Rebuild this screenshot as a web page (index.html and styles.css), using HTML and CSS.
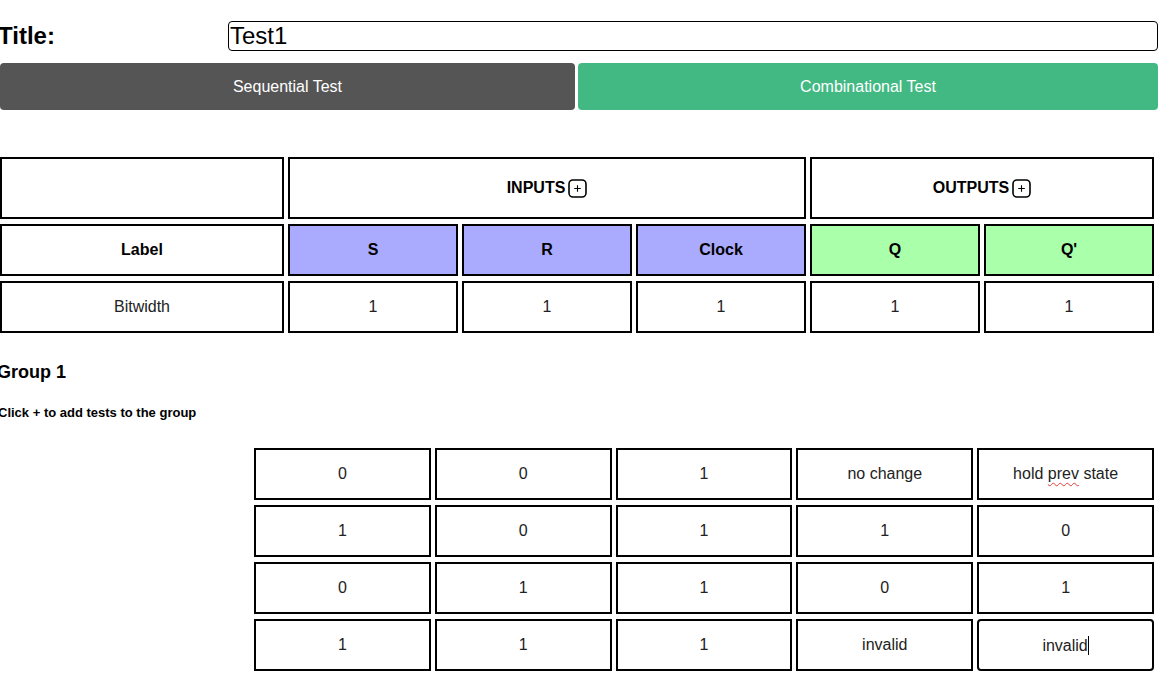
FILE: index.html
```html
<!DOCTYPE html>
<html>
<head>
<meta charset="utf-8">
<link rel="stylesheet" href="styles.css">
</head>
<body>
<div class="page">
  <div class="title-row">
    <label class="title-label">Title:</label>
    <div class="title-input">Test1</div>
  </div>
  <div class="mode-bar">
    <button class="mode-btn seq">Sequential Test</button>
    <button class="mode-btn comb">Combinational Test</button>
  </div>

  <div class="head-grid">
    <div class="cell blank"></div>
    <div class="cell group-head span3"><span>INPUTS</span><svg class="plus" viewBox="0 0 19 19" width="19" height="19"><rect x="1" y="1" width="17" height="17" rx="4" fill="none" stroke="#000" stroke-width="1.6"/><path d="M6.2 9.5h6.6M9.5 6.2v6.6" stroke="#000" stroke-width="1.1"/></svg></div>
    <div class="cell group-head span2"><span>OUTPUTS</span><svg class="plus" viewBox="0 0 19 19" width="19" height="19"><rect x="1" y="1" width="17" height="17" rx="4" fill="none" stroke="#000" stroke-width="1.6"/><path d="M6.2 9.5h6.6M9.5 6.2v6.6" stroke="#000" stroke-width="1.1"/></svg></div>

    <div class="cell bold">Label</div>
    <div class="cell bold input-col">S</div>
    <div class="cell bold input-col">R</div>
    <div class="cell bold input-col">Clock</div>
    <div class="cell bold output-col">Q</div>
    <div class="cell bold output-col">Q'</div>

    <div class="cell">Bitwidth</div>
    <div class="cell">1</div>
    <div class="cell">1</div>
    <div class="cell">1</div>
    <div class="cell">1</div>
    <div class="cell">1</div>
  </div>

  <h3 class="group-title">Group 1</h3>
  <p class="group-hint">Click + to add tests to the group</p>

  <div class="test-grid">
    <div class="cell">0</div>
    <div class="cell">0</div>
    <div class="cell">1</div>
    <div class="cell">no change</div>
    <div class="cell"><span>hold <span class="spell">prev</span> state</span></div>

    <div class="cell">1</div>
    <div class="cell">0</div>
    <div class="cell">1</div>
    <div class="cell">1</div>
    <div class="cell">0</div>

    <div class="cell">0</div>
    <div class="cell">1</div>
    <div class="cell">1</div>
    <div class="cell">0</div>
    <div class="cell">1</div>

    <div class="cell">1</div>
    <div class="cell">1</div>
    <div class="cell">1</div>
    <div class="cell">invalid</div>
    <div class="cell focused"><span>invalid<span class="caret"></span></span></div>
  </div>
</div>
</body>
</html>
```
FILE: styles.css
```css
html, body {
  margin: 0;
  padding: 0;
  background: #fff;
}
body {
  font-family: "Liberation Sans", Arial, sans-serif;
  color: #000;
  overflow: hidden;
}
.page {
  width: 1162px;
  padding-top: 21px;
}
.title-row {
  display: flex;
  align-items: center;
  height: 30px;
}
.title-label {
  width: 230px;
  margin-left: -2px;
  font-size: 24px;
  font-weight: bold;
  line-height: 30px;
}
.title-input {
  box-sizing: border-box;
  width: 930px;
  height: 30px;
  border: 1px solid #000;
  border-radius: 4px;
  font-size: 24px;
  line-height: 28px;
  padding-left: 1px;
  color: #000;
}
.mode-bar {
  display: grid;
  grid-template-columns: 575px 580px;
  gap: 3px;
  margin-top: 12px;
}
.mode-btn {
  height: 47px;
  border: none;
  border-radius: 4px;
  color: #fff;
  font-family: "Liberation Sans", Arial, sans-serif;
  font-size: 16px;
  padding: 0;
}
.mode-btn.seq { background: #555555; }
.mode-btn.comb { background: #42b983; }

.head-grid {
  display: grid;
  grid-template-columns: 284px repeat(5, 170px);
  grid-template-rows: 62px 52px 52px;
  gap: 5px 4px;
  margin-top: 47px;
}
.cell {
  box-sizing: border-box;
  border: 2px solid #000;
  display: flex;
  align-items: center;
  justify-content: center;
  font-size: 16px;
  color: #222;
  background: #fff;
}
.bold { font-weight: bold; color: #000; }
.span3 { grid-column: span 3; }
.span2 { grid-column: span 2; }
.group-head {
  font-weight: bold;
  color: #000;
  gap: 3px;
}
.plus { display: block; }
.input-col { background: #aaaaff; }
.output-col { background: #aaffaa; }

.group-title {
  margin: 29px 0 0 -3px;
  font-size: 18px;
  line-height: 20px;
  font-weight: bold;
}
.group-hint {
  margin: 23px 0 0 -2px;
  font-size: 13px;
  line-height: 15px;
  font-weight: bold;
}
.test-grid {
  display: grid;
  grid-template-columns: repeat(5, 1fr);
  grid-auto-rows: 52px;
  gap: 5px 4px;
  width: 900px;
  margin: 28px 0 0 254px;
}
.focused { border-radius: 4px; }
.spell {
  text-decoration: underline wavy #e0403a;
  text-decoration-thickness: 1px;
  text-underline-offset: 3px;
}
.caret {
  display: inline-block;
  width: 1px;
  height: 19px;
  vertical-align: -4px;
  background: #000;
}
```
